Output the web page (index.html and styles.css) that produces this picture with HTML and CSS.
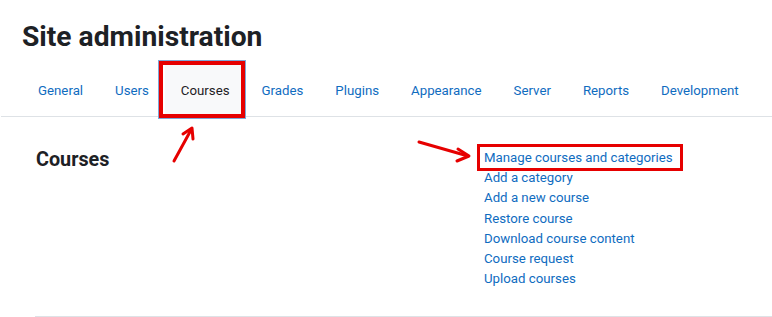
FILE: index.html
```html
<!DOCTYPE html>
<html lang="en">
<head>
<meta charset="utf-8">
<title>Site administration</title>
<link rel="stylesheet" href="styles.css">
</head>
<body>
<header class="page-header">
  <h1 class="title">Site administration</h1>
</header>
<nav class="tabs">
  <a class="tab" href="#">General</a>
  <a class="tab" href="#">Users</a>
  <a class="tab active" href="#">Courses</a>
  <a class="tab" href="#">Grades</a>
  <a class="tab" href="#">Plugins</a>
  <a class="tab" href="#">Appearance</a>
  <a class="tab" href="#">Server</a>
  <a class="tab" href="#">Reports</a>
  <a class="tab" href="#">Development</a>
</nav>
<main class="content">
  <section class="section">
    <h2 class="section-title">Courses</h2>
    <ul class="links">
      <li><a class="link marked" href="#">Manage courses and categories</a></li>
      <li><a class="link" href="#">Add a category</a></li>
      <li><a class="link" href="#">Add a new course</a></li>
      <li><a class="link" href="#">Restore course</a></li>
      <li><a class="link" href="#">Download course content</a></li>
      <li><a class="link" href="#">Course request</a></li>
      <li><a class="link" href="#">Upload courses</a></li>
    </ul>
  </section>
</main>
<svg class="annotations" width="772" height="317" viewBox="0 0 772 317">
  <g stroke="#e60000" stroke-width="3" fill="none" stroke-linecap="round" stroke-linejoin="round">
    <line x1="174" y1="161" x2="191" y2="130"/>
    <polyline points="183,134 192,128 193,139"/>
    <line x1="419" y1="142" x2="468" y2="156"/>
    <polyline points="458,149 469,156 457,161"/>
  </g>
</svg>
</body>
</html>
```
FILE: styles.css
```css
* { box-sizing: border-box; }
html, body { margin: 0; padding: 0; }
body {
  width: 772px;
  height: 317px;
  overflow: hidden;
  background: #fff;
  font-family: Roboto, "Noto Sans", sans-serif;
  color: #1d2125;
  position: relative;
}
.page-header {
  padding: 18px 0 0 22px;
}
.title {
  margin: 0;
  font-size: 28.2px;
  font-weight: 700;
  line-height: 38px;
}
.tabs {
  display: flex;
  margin: 5px 0 0 1px;
  padding-left: 21px;
  border-bottom: 1px solid #dee2e6;
  height: 56px;
}
.tab {
  position: relative;
  display: flex;
  align-items: center;
  padding: 3px 16px 0;
  height: 55px;
  font-size: 13.25px;
  color: #0f6cbf;
  text-decoration: none;
  white-space: nowrap;
}
.tab.active {
  color: #1d2125;
  background: #f8f9fa;
}
.tab.active::after {
  content: "";
  position: absolute;
  top: 0; bottom: -2px; left: -6px; right: 1px;
  border: 4px solid #e60000;
  box-shadow: 0 0 0 1px #7fa8d8;
}
.content {
  padding: 0 0 0 35px;
}
.section {
  display: grid;
  grid-template-columns: 448px 1fr;
  padding: 28px 0 24px 1px;
  border-bottom: 1px solid #dee2e6;
  height: 200px;
}
.section-title {
  margin: 0;
  font-size: 19.8px;
  font-weight: 700;
  line-height: 30px;
}
.links {
  list-style: none;
  margin: 0;
  padding: 3px 0 0 0;
}
.links li {
  line-height: 20.2px;
  font-size: 13.25px;
}
.link {
  color: #0f6cbf;
  text-decoration: none;
}
.link.marked {
  position: relative;
}
.link.marked::after {
  content: "";
  position: absolute;
  top: -6px; bottom: -6px; left: -7px; right: -10px;
  border: 3px solid #e60000;
}
.annotations {
  position: absolute;
  left: 0; top: 0;
  pointer-events: none;
}
```
